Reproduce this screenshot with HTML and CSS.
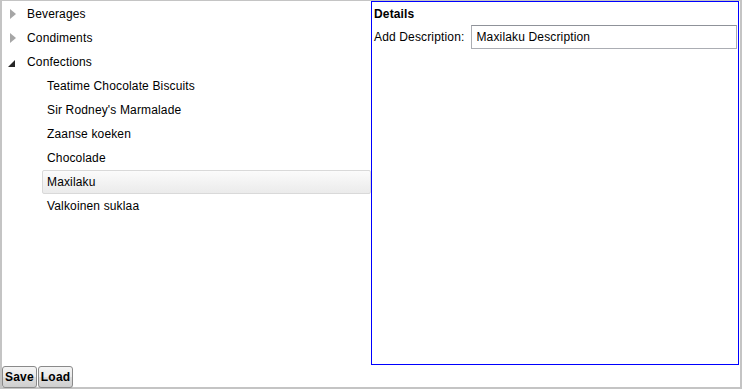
FILE: index.html
```html
<!DOCTYPE html>
<html lang="en">
<head>
    <meta charset="UTF-8">
    <title>Categories</title>
    <link rel="stylesheet" href="styles.css">
</head>
<body>
    <div class="window">
        <div class="main">
            <!-- tree -->
            <ul class="tree">
                <li class="node">
                    <span class="expander collapsed"></span>
                    <span class="label">Beverages</span>
                </li>
                <li class="node">
                    <span class="expander collapsed"></span>
                    <span class="label">Condiments</span>
                </li>
                <li class="node">
                    <span class="expander expanded"></span>
                    <span class="label">Confections</span>
                </li>
                <li class="node child"><span class="label">Teatime Chocolate Biscuits</span></li>
                <li class="node child"><span class="label">Sir Rodney's Marmalade</span></li>
                <li class="node child"><span class="label">Zaanse koeken</span></li>
                <li class="node child"><span class="label">Chocolade</span></li>
                <li class="node child selected"><span class="label">Maxilaku</span></li>
                <li class="node child"><span class="label">Valkoinen suklaa</span></li>
            </ul>

            <!-- details -->
            <div class="details">
                <div class="details-title">Details</div>
                <div class="field">
                    <label for="desc">Add Description:</label>
                    <input id="desc" class="textbox" type="text" value="Maxilaku Description">
                </div>
            </div>
        </div>

        <div class="toolbar">
            <button class="btn">Save</button>
            <button class="btn">Load</button>
        </div>
    </div>
</body>
</html>
```

FILE: styles.css
```css
body {
    margin: 0;
    font-family: Tahoma, "Liberation Sans", Arial, sans-serif;
    font-size: 12px;
    letter-spacing: 0.15px;
    color: #000;
    background: #fff;
}

.window {
    width: 742px;
    height: 389px;
    box-sizing: border-box;
    border: 2px solid #c4c4c4;
    border-top-width: 1px;
    display: flex;
    flex-direction: column;
}

.main {
    display: flex;
    height: 364px;
}

/* tree */
.tree {
    list-style: none;
    margin: 0;
    padding: 1px 0 0 0;
    width: 369px;
}

.node {
    display: flex;
    align-items: center;
    height: 24px;
    box-sizing: border-box;
    padding-left: 8px;
}

.node.child {
    margin-left: 40px;
    padding-left: 5px;
}

.node.selected {
    border: 1px solid #d9d9d9;
    border-radius: 2px;
    background: linear-gradient(#fbfbfb, #ebebeb);
    padding-left: 4px;
}

.expander.collapsed {
    width: 0;
    height: 0;
    border-top: 5px solid transparent;
    border-bottom: 5px solid transparent;
    border-left: 6px solid #a6a6a6;
    margin-right: 11px;
}

.expander.expanded {
    width: 0;
    height: 0;
    border-left: 7px solid transparent;
    border-bottom: 7px solid #262626;
    margin: 2px 12px 0 -2px;
}

/* details */
.details {
    width: 368px;
    height: 364px;
    box-sizing: border-box;
    border: 1px solid #0000ff;
    padding: 4px 1px 0 2px;
}

.details-title {
    font-weight: bold;
    height: 16px;
    line-height: 16px;
}

.field {
    display: flex;
    align-items: center;
    margin-top: 3px;
}

.field label {
    margin-right: 7px;
}

.textbox {
    flex: 1;
    height: 24px;
    box-sizing: border-box;
    border: 1px solid #abadb3;
    border-top-color: #8f9299;
    padding: 0 4px;
    font-family: inherit;
    font-size: 12px;
    letter-spacing: 0.15px;
    color: #000;
    outline: none;
}

/* toolbar */
.toolbar {
    display: flex;
    gap: 1px;
    padding: 1px 0 0 0;
}

.btn {
    height: 22px;
    padding: 0 2px;
    font-family: inherit;
    font-size: 12px;
    font-weight: bold;
    letter-spacing: 0.2px;
    color: #000;
    border: 1px solid #8a8a8a;
    border-radius: 3px;
    background: linear-gradient(#f4f4f4 0%, #ebebeb 50%, #dddddd 51%, #cfcfcf 100%);
}
```
